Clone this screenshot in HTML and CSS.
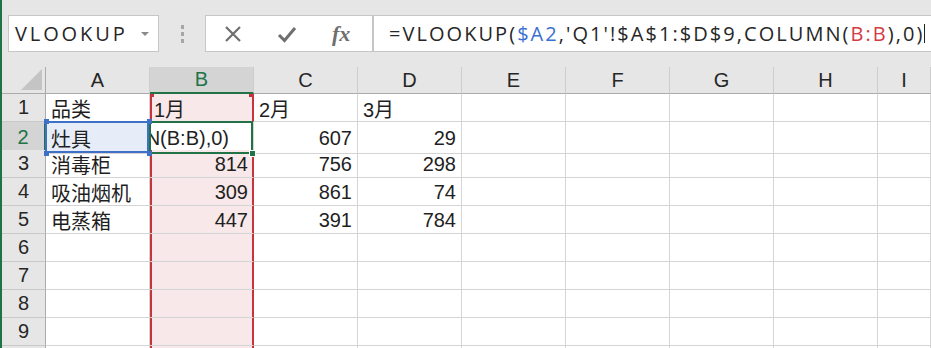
FILE: index.html
```html
<!DOCTYPE html>
<html lang="zh-CN">
<head>
  <meta charset="UTF-8">
  <title>VLOOKUP</title>
  <link rel="stylesheet" href="styles.css">
</head>
<body>
  <div class="app">

    <div class="toolbar">
      <div class="namebox">
        <span class="name">VLOOKUP</span>
        <span class="caret"></span>
      </div>
      <div class="grip"><i></i><i></i><i></i></div>
      <div class="fxbox">
        <svg class="tool" width="22" height="22" viewBox="0 0 22 22">
          <path d="M4 4 L18 18 M18 4 L4 18" stroke="#6f6f6f" stroke-width="2.2" fill="none"/>
        </svg>
        <svg class="tool" width="22" height="22" viewBox="0 0 22 22">
          <path d="M3 12 L8.5 17.5 L19 5" stroke="#6f6f6f" stroke-width="3" fill="none"/>
        </svg>
        <span class="fx">fx</span>
      </div>
      <div class="formula">
        <span>=VLOOKUP(<span class="blue">$A2</span>,'Q1'!$A$1:$D$9,COLUMN(<span class="red">B:B</span>),0)</span><span class="cursor"></span>
      </div>
    </div>

    <div class="sheet">
      <div class="row head">
        <div class="corner"><span class="tri"></span></div>
        <div class="hd">A</div>
        <div class="hd active">B</div>
        <div class="hd">C</div>
        <div class="hd">D</div>
        <div class="hd">E</div>
        <div class="hd">F</div>
        <div class="hd">G</div>
        <div class="hd">H</div>
        <div class="hd">I</div>
      </div>

      <div class="row">
        <div class="rh">1</div>
        <div class="c">品类</div>
        <div class="c colb top">1月</div>
        <div class="c">2月</div>
        <div class="c">3月</div>
        <div class="c"></div><div class="c"></div><div class="c"></div><div class="c"></div><div class="c"></div>
      </div>

      <div class="row">
        <div class="rh active">2</div>
        <div class="c refblue">灶具<i class="h tl"></i><i class="h tr"></i><i class="h bl"></i><i class="h br"></i></div>
        <div class="c current"><span class="edit"><span>=VLOOKUP($A2,'Q1'!$A$1:$D$9,COLUMN(B:B),0)</span></span><i class="fill"></i></div>
        <div class="c num">607</div>
        <div class="c num">29</div>
        <div class="c"></div><div class="c"></div><div class="c"></div><div class="c"></div><div class="c"></div>
      </div>

      <div class="row">
        <div class="rh">3</div>
        <div class="c">消毒柜</div>
        <div class="c colb num">814</div>
        <div class="c num">756</div>
        <div class="c num">298</div>
        <div class="c"></div><div class="c"></div><div class="c"></div><div class="c"></div><div class="c"></div>
      </div>

      <div class="row">
        <div class="rh">4</div>
        <div class="c">吸油烟机</div>
        <div class="c colb num">309</div>
        <div class="c num">861</div>
        <div class="c num">74</div>
        <div class="c"></div><div class="c"></div><div class="c"></div><div class="c"></div><div class="c"></div>
      </div>

      <div class="row">
        <div class="rh">5</div>
        <div class="c">电蒸箱</div>
        <div class="c colb num">447</div>
        <div class="c num">391</div>
        <div class="c num">784</div>
        <div class="c"></div><div class="c"></div><div class="c"></div><div class="c"></div><div class="c"></div>
      </div>

      <div class="row">
        <div class="rh">6</div>
        <div class="c"></div><div class="c colb"></div><div class="c"></div><div class="c"></div>
        <div class="c"></div><div class="c"></div><div class="c"></div><div class="c"></div><div class="c"></div>
      </div>

      <div class="row">
        <div class="rh">7</div>
        <div class="c"></div><div class="c colb"></div><div class="c"></div><div class="c"></div>
        <div class="c"></div><div class="c"></div><div class="c"></div><div class="c"></div><div class="c"></div>
      </div>

      <div class="row">
        <div class="rh">8</div>
        <div class="c"></div><div class="c colb"></div><div class="c"></div><div class="c"></div>
        <div class="c"></div><div class="c"></div><div class="c"></div><div class="c"></div><div class="c"></div>
      </div>

      <div class="row">
        <div class="rh">9</div>
        <div class="c"></div><div class="c colb"></div><div class="c"></div><div class="c"></div>
        <div class="c"></div><div class="c"></div><div class="c"></div><div class="c"></div><div class="c"></div>
      </div>

      <div class="row">
        <div class="rh">10</div>
        <div class="c"></div><div class="c colb"></div><div class="c"></div><div class="c"></div>
        <div class="c"></div><div class="c"></div><div class="c"></div><div class="c"></div><div class="c"></div>
      </div>
    </div>

  </div>
</body>
</html>
```

FILE: styles.css
```css
html, body {
  margin: 0;
  padding: 0;
  overflow: hidden;
  background: #fff;
}

.app {
  width: 929px;
  height: 348px;
  border-left: 2px solid #217346;
  overflow: hidden;
  font-family: "Liberation Sans", "Noto Sans CJK SC", sans-serif;
  color: #1f1f1f;
}

/* toolbar */

.toolbar {
  height: 67px;
  background: #e6e6e6;
  display: flex;
  align-items: flex-start;
  padding-top: 15px;
  box-sizing: border-box;
}

.namebox {
  margin-left: 6px;
  width: 151px;
  height: 37px;
  box-sizing: border-box;
  background: #fff;
  border: 1px solid #c6c6c6;
  display: flex;
  align-items: center;
  padding-left: 6px;
  position: relative;
}

.name {
  font-family: "Open Sans", sans-serif;
  font-size: 20px;
  letter-spacing: 2.9px;
  color: #262626;
}

.caret {
  position: absolute;
  right: 9px;
  top: 16px;
  border-left: 4px solid transparent;
  border-right: 4px solid transparent;
  border-top: 4px solid #8a8a8a;
}

.grip {
  width: 46px;
  height: 37px;
  display: flex;
  flex-direction: column;
  align-items: center;
  justify-content: center;
  gap: 3px;
}

.grip i {
  width: 3px;
  height: 4px;
  background: #a6a6a6;
}

.fxbox {
  width: 168px;
  height: 37px;
  box-sizing: border-box;
  background: #fff;
  border: 1px solid #c6c6c6;
  display: flex;
  align-items: center;
  padding-left: 16px;
  gap: 32px;
}

.fx {
  font-family: "Liberation Serif", serif;
  font-style: italic;
  font-weight: bold;
  font-size: 22px;
  color: #6f6f6f;
  margin-left: 2px;
}

.formula {
  flex: 1;
  height: 37px;
  box-sizing: border-box;
  background: #fff;
  border: 1px solid #c6c6c6;
  border-right: none;
  display: flex;
  align-items: center;
  padding-left: 15px;
  font-family: "Open Sans", sans-serif;
  font-size: 20px;
  letter-spacing: 2.05px;
  color: #262626;
  white-space: nowrap;
}

.blue { color: #3a6fd0; }
.red { color: #d23c44; }

.cursor {
  width: 1px;
  height: 19px;
  background: #222;
  margin-left: 0;
}

/* sheet */

.row {
  display: grid;
  grid-template-columns: 44px repeat(8, 104px) 1fr;
  height: 28px;
}

.row.head {
  height: 27px;
  background: #e6e6e6;
}

.corner {
  border-right: 1px solid #ababab;
  border-bottom: 1px solid #ababab;
  position: relative;
}

.tri {
  position: absolute;
  right: 3px;
  bottom: 3px;
  width: 0;
  height: 0;
  border-left: 21px solid transparent;
  border-bottom: 21px solid #c4c4c4;
}

.hd {
  border-right: 1px solid #cdcdcd;
  border-bottom: 1px solid #ababab;
  display: flex;
  align-items: center;
  justify-content: center;
  font-size: 20px;
  color: #262626;
}

.hd.active {
  background: #d4d4d4;
  color: #217346;
  border-bottom: 2px solid #217346;
}

.rh {
  background: #e6e6e6;
  border-right: 1px solid #ababab;
  border-bottom: 1px solid #c8c8c8;
  display: flex;
  align-items: center;
  justify-content: center;
  font-size: 20px;
  color: #262626;
}

.rh.active {
  background: #d4d4d4;
  color: #217346;
  border-right: 2px solid #217346;
}

.c {
  border-right: 1px solid #d4d4d4;
  border-bottom: 1px solid #d4d4d4;
  display: flex;
  align-items: center;
  padding: 2px 4px 0 5px;
  font-size: 20px;
  white-space: nowrap;
  overflow: hidden;
  position: relative;
}

.num {
  justify-content: flex-end;
  padding-right: 5px;
}

/* column B range reference */
.colb {
  background: #f8e8e9;
  border-right-color: #c6343f;
  box-shadow: inset 2px 0 0 #c6343f, inset -1px 0 0 #c6343f;
  padding-left: 4px;
}

.colb.top::before,
.colb.top::after {
  content: "";
  position: absolute;
  top: 0;
  width: 4px;
  height: 3px;
  background: #c6343f;
}

.colb.top::before { left: 0; }
.colb.top::after { right: 0; }

/* A2 range reference */
.refblue {
  background: #e6edf8;
  overflow: visible;
}

.refblue::after {
  content: "";
  position: absolute;
  inset: -1px 0 0 -1px;
  border: 2px solid #3f70c8;
}

.h {
  position: absolute;
  width: 5px;
  height: 5px;
  background: #3f70c8;
  z-index: 2;
}

.h.tl { left: -2px; top: -3px; }
.h.tr { right: -3px; top: -3px; }
.h.bl { left: -2px; bottom: -3px; }
.h.br { right: -3px; bottom: -3px; }

/* active cell B2 */
.current {
  justify-content: flex-start;
  padding-left: 0;
  overflow: visible;
}

.current::after {
  content: "";
  position: absolute;
  inset: -1px 0 -1px -1px;
  border: 2px solid #217346;
  z-index: 1;
}

.edit {
  display: flex;
  justify-content: flex-end;
  width: 79px;
  overflow: hidden;
  color: #1f1f1f;
}

.edit span {
  flex-shrink: 0;
}

.fill {
  position: absolute;
  right: -3px;
  bottom: -4px;
  width: 5px;
  height: 5px;
  background: #217346;
  border: 1px solid #fff;
  z-index: 3;
}
```
